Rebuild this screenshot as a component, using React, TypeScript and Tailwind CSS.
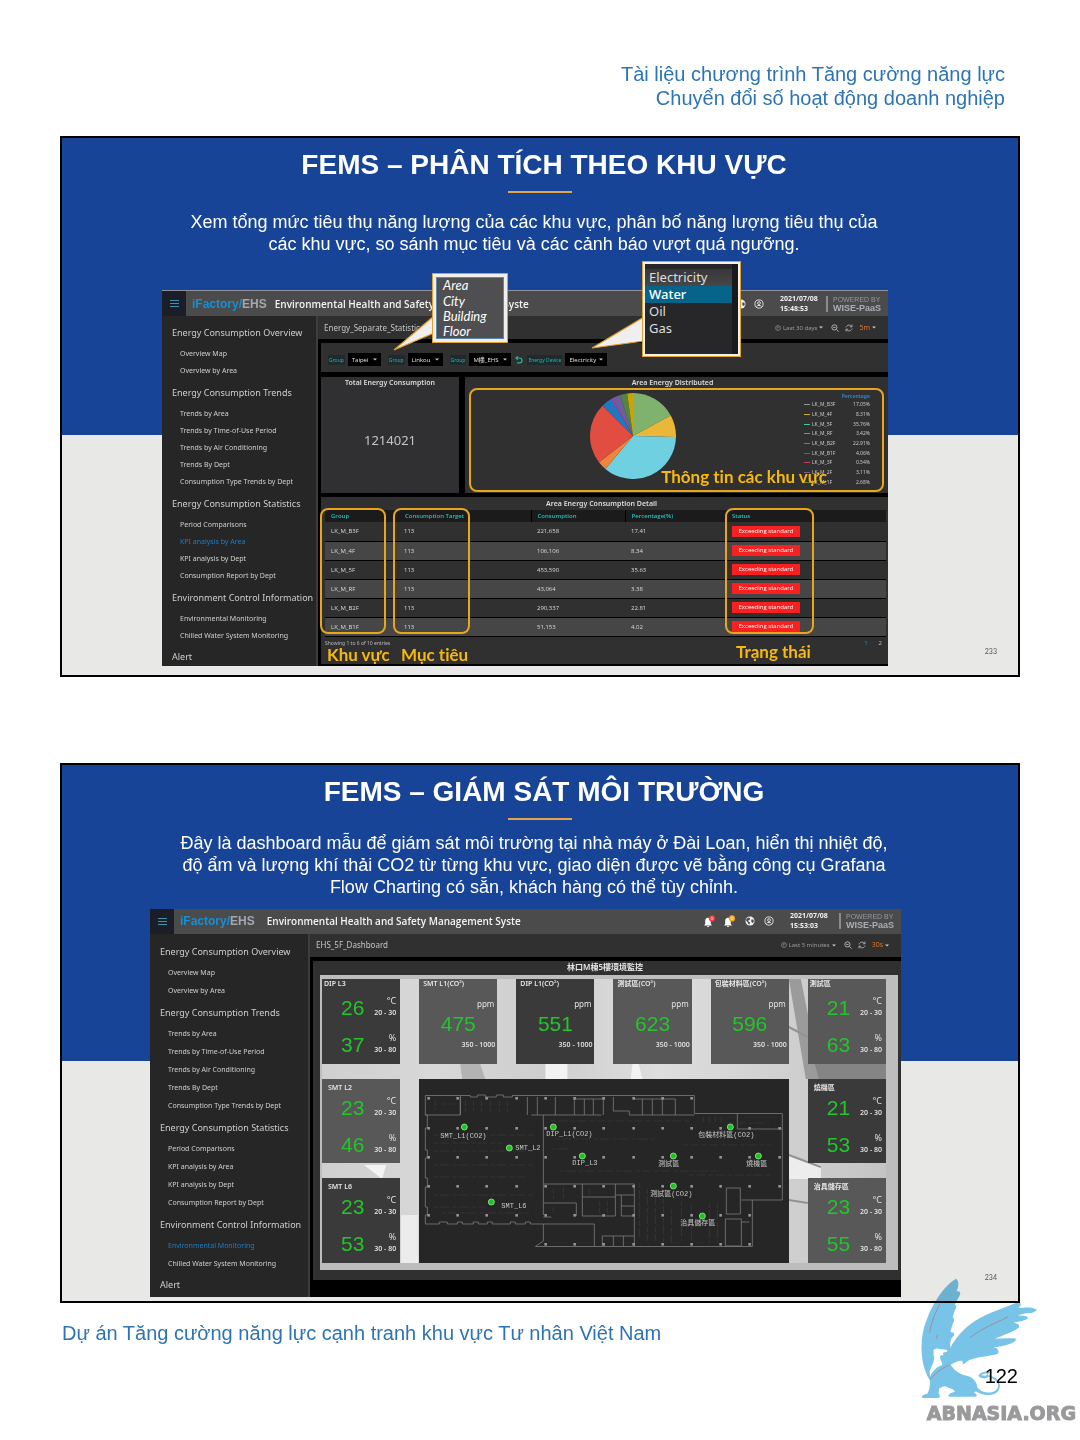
import React from 'react';

type NavGroup = { title: string; items: string[] };

const NAV: NavGroup[] = [
  { title: 'Energy Consumption Overview', items: ['Overview Map', 'Overview by Area'] },
  {
    title: 'Energy Consumption Trends',
    items: ['Trends by Area', 'Trends by Time-of-Use Period', 'Trends by Air Conditioning', 'Trends By Dept', 'Consumption Type Trends by Dept'],
  },
  {
    title: 'Energy Consumption Statistics',
    items: ['Period Comparisons', 'KPI analysis by Area', 'KPI analysis by Dept', 'Consumption Report by Dept'],
  },
  { title: 'Environment Control Information', items: ['Environmental Monitoring', 'Chilled Water System Monitoring'] },
];

function Sidebar({ active, roomy }: { active: string; roomy?: boolean }) {
  return (
    <nav className={`shrink-0 bg-[#262626] pl-[10px] whitespace-nowrap text-[#cfcfcf] ${roomy ? 'w-[158px] pt-[5px]' : 'w-[154px] pt-[3px]'}`}>
      {NAV.map((g) => (
        <section key={g.title}>
          <h3 className={`flex items-center pt-0.5 text-[9px] leading-3 ${roomy ? 'h-[25px]' : 'h-[26px]'}`}>{g.title}</h3>
          <ul>
            {g.items.map((i) => (
              <li key={i} className={`flex items-center pl-2 text-[7px] leading-3 ${roomy ? 'h-[18px]' : 'h-[17px]'}`}>
                <a href="#" className={i === active ? 'text-[#1b7fc4]' : ''}>{i}</a>
              </li>
            ))}
          </ul>
        </section>
      ))}
      <h3 className="flex h-[21px] items-center pt-1 text-[9px] leading-3">Alert</h3>
    </nav>
  );
}

function Globe() {
  return (
    <svg viewBox="0 0 10 10" className="size-[10px]">
      <circle cx="5" cy="5" r="4.5" fill="#f2f2f2" />
      <path d="M2 2.4L4 1.4L5.2 2.6L4.6 4L3.2 4.4L3.4 5.6L5 6.2L4.6 8.6L3.4 8L2.8 6.4L1.4 5L1 3.8ZM6.4 3.6L8.4 3.4L8.8 5.4L8 7L6.8 6.6L6.2 5.2Z" fill="#4a4a4a" />
    </svg>
  );
}

function UserIcon() {
  return (
    <svg viewBox="0 0 10 10" className="size-[10px]" fill="none" stroke="#e8e8e8">
      <circle cx="5" cy="5" r="4.1" strokeWidth="0.9" />
      <circle cx="5" cy="4.1" r="1.4" strokeWidth="0.9" />
      <path d="M2.6 7.4 C3.2 6 6.8 6 7.4 7.4" strokeWidth="1" />
    </svg>
  );
}

function Bell({ badge }: { badge: string }) {
  return (
    <svg viewBox="0 0 13 13" className="size-[13px]">
      <path d="M1 10.5 L2.2 9 V6 C2.2 3.8 3.4 2.8 5 2.8 C6.6 2.8 7.8 3.8 7.8 6 V9 L9 10.5 Z M3.8 11 H6.2 C6 12.2 4 12.2 3.8 11 Z" fill="#fff" />
      <circle cx="9" cy="3.4" r="3.1" fill={badge} />
      <ellipse cx="9" cy="3.4" rx="1" ry="1.6" fill="none" stroke="#fff" strokeWidth="0.6" />
    </svg>
  );
}

function TopBar({ time, bells }: { time: string; bells?: boolean }) {
  return (
    <header className="flex h-[25px] items-center bg-[#4b4b4b] pr-[7px] whitespace-nowrap">
      <button aria-label="Menu" className="flex h-full w-6 items-center justify-center bg-[#1c1e27]">
        <svg viewBox="0 0 9 7" className="h-[7px] w-[9px]" stroke="#3d93ae" strokeWidth="1"><path d="M0 .5H9M0 3.5H9M0 6.5H9" /></svg>
      </button>
      <span className="ml-1.5 font-['Liberation_Sans',sans-serif] text-[12px] leading-4 font-bold text-[#168fd6]">
        iFactory/<span className="text-[#a4a8ae]">EHS</span>
      </span>
      <h2 className={`font-['Open_Sans',sans-serif] text-[10px] leading-4 font-semibold text-[#f4f4f4] ${bells ? 'ml-3' : 'ml-2'}`}>Environmental Health and Safety Management Syste</h2>
      <div className={`ml-auto flex items-center ${bells ? 'gap-[9px]' : 'gap-2'}`}>
        {bells && <><Bell badge="#e5383b" /><span className="-ml-0.5"><Bell badge="#f0a020" /></span></>}
        <Globe />
        <UserIcon />
      </div>
      <p className={`text-[7px] leading-[10px] font-bold text-[#f0f0f0] ${bells ? 'ml-4 w-[43px]' : 'ml-4 w-10'}`}>2021/07/08<br />{time}</p>
      <div className="ml-[6px] h-4 border-l-2 border-[#8c8c8c] pl-[5px] font-['Liberation_Sans',sans-serif] text-[#9599a0]">
        <div className="text-[7px] leading-[7px]">POWERED BY</div>
        <div className="text-[9px] leading-[10px] font-bold text-[#a9adb5]">WISE-PaaS</div>
      </div>
    </header>
  );
}

function Crumbs({ name, range, every }: { name: string; range: string; every: string }) {
  return (
    <div className="flex h-[23px] items-center bg-[#303030] pr-3 pl-[6px] text-[8px] leading-3 text-[#c4c4c4]">
      <span>{name}</span>
      <button className="ml-auto flex items-center gap-0.5 text-[6px] text-[#9a9a9a]">
        <svg viewBox="0 0 6 6" className="size-[6px]" fill="none" stroke="#9a9a9a" strokeWidth=".7"><circle cx="3" cy="3" r="2.4" /><path d="M3 1.5V3H1.8" /></svg>
        {range} <Caret />
      </button>
      <svg viewBox="0 0 8 8" className="ml-2 size-2" fill="none" stroke="#b0b0b0" strokeWidth="1"><circle cx="3.4" cy="3.4" r="2.6" /><path d="M5.4 5.4L7.6 7.6M2.2 3.4H4.6" /></svg>
      <svg viewBox="0 0 8 8" className="ml-[6px] size-2" fill="none" stroke="#b0b0b0" strokeWidth=".9"><path d="M1 3.4C1.6 .6 5.6 .4 6.8 2.6M7 .6V2.8H4.8M7 4.6C6.4 7.4 2.4 7.6 1.2 5.4M1 7.4V5.2H3.2" /></svg>
      <button className="ml-[6px] flex items-center gap-0.5 text-[7px] text-[#e0742c]">{every} <Caret /></button>
    </div>
  );
}

function Caret() {
  return <svg viewBox="0 0 4 3" className="h-[3px] w-1 shrink-0"><path d="M0 .4H4L2 2.6Z" fill="#c8c8c8" /></svg>;
}

function Filter({ id, label, value, width }: { id: string; label: string; value: string; width: string }) {
  return (
    <div className="flex items-center text-[6px] leading-[10px]">
      <label htmlFor={id} className="bg-[#1f2a2d] px-px text-[5px] text-[#22b5af]">{label}</label>
      <div className="relative ml-[3px]">
        <select id={id} className={`h-[13px] appearance-none bg-black pl-1 font-['Open_Sans','Noto_Sans_CJK_TC',sans-serif] text-[#e2e2e2] ${width}`}><option>{value}</option></select>
        <span className="absolute top-[5px] right-1 flex"><Caret /></span>
      </div>
    </div>
  );
}

const SHARES = [
  { name: 'LK_M_B3F', pct: 17.05, slice: '#7eb26d', key: '#8f9c8c' },
  { name: 'LK_M_4F', pct: 8.31, slice: '#eab839', key: '#c7b021' },
  { name: 'LK_M_5F', pct: 35.76, slice: '#6ed0e0', key: '#3fc9a8' },
  { name: 'LK_M_RF', pct: 3.42, slice: '#ef843c', key: '#e8673a' },
  { name: 'LK_M_B2F', pct: 22.91, slice: '#e24d42', key: '#e2425c' },
  { name: 'LK_M_B1F', pct: 4.06, slice: '#1f78c1', key: '#1f78c1' },
  { name: 'LK_M_3F', pct: 0.54, slice: '#ba43a9', key: '#c0405e' },
  { name: 'LK_M_2F', pct: 3.11, slice: '#705da0', key: '#705da0' },
  { name: 'LK_M_1F', pct: 2.68, slice: '#508642', key: '#508642' },
];

function Pie() {
  const slices = [...SHARES.map((s) => ({ pct: s.pct, color: s.slice })), { pct: 2.16, color: '#cca300' }];
  let at = 0;
  const point = (p: number) => {
    const a = (p / 100) * Math.PI * 2;
    return `${43 + 43 * Math.sin(a)} ${43 - 43 * Math.cos(a)}`;
  };
  return (
    <svg viewBox="0 0 86 86" className="size-[86px]">
      {slices.map((s) => {
        const from = at;
        at += s.pct;
        return <path key={s.color} fill={s.color} d={`M43 43 L${point(from)} A43 43 0 0 1 ${point(at)} Z`} />;
      })}
    </svg>
  );
}

const ROWS = [
  ['LK_M_B3F', '113', '221,658', '17.41'],
  ['LK_M_4F', '113', '106,106', '8.34'],
  ['LK_M_5F', '113', '453,590', '35.63'],
  ['LK_M_RF', '113', '43,064', '3.38'],
  ['LK_M_B2F', '113', '290,337', '22.81'],
  ['LK_M_B1F', '113', '51,153', '4.02'],
];

function EnergyDashboard() {
  const label = "absolute font-['Lato',sans-serif] text-[17px] leading-5 font-bold whitespace-nowrap text-[#f8b90d] [font-variant-ligatures:none]";
  const frame = 'absolute rounded-lg border-2 border-[#e9a51c]';
  return (
    <div className="relative mr-[130px] ml-[100px] border-t border-[#8d9099] bg-black font-['Noto_Sans','Noto_Sans_CJK_TC',sans-serif]">
      <TopBar time="15:48:53" />
      <div className="flex">
        <Sidebar active="KPI analysis by Area" />
        <main className="min-w-0 flex-1 border-l-2 border-[#3d3d3d] bg-black pb-0.5">
          <Crumbs name="Energy_Separate_Statistic" range="Last 30 days" every="5m" />
          <div className="mt-1 ml-[3px] flex h-[29px] items-center gap-[7px] bg-[#303030] pt-1 pl-[7px]">
            <Filter id="city" label="Group" value="Taipei" width="w-[33px]" />
            <Filter id="site" label="Group" value="Linkou" width="w-[35px]" />
            <Filter id="building" label="Group" value="M樓_EHS" width="w-[42px]" />
            <button aria-label="Reload" className="-mx-[3px] flex"><svg viewBox="0 0 8 8" className="size-2" fill="none" stroke="#1fb5a0" strokeWidth="1.2"><path d="M1 2H4.6A2.3 2.3 0 0 1 4.6 6.8H2M2.8 .4L1 2L2.8 3.8" /></svg></button>
            <Filter id="device" label="Energy Device" value="Electricity" width="w-[42px]" />
          </div>
          <div className="mt-[5px] ml-[3px] flex h-[116px] gap-[6px]">
            <section className="flex w-[138px] flex-col bg-[#303033] text-center">
              <h4 className="text-[7px] leading-3 font-semibold text-[#dcdcdc]">Total Energy Consumption</h4>
              <p className="flex flex-1 items-center justify-center text-[13px] text-[#c4c4c4]">1214021</p>
            </section>
            <section className="relative flex-1 bg-[#303030]">
              <h4 className="pr-2 text-center text-[7px] leading-3 font-semibold text-[#dcdcdc]">Area Energy Distributed</h4>
              <div className="flex items-start justify-between pt-1 pr-[14px]">
                <div className="pl-[125px]"><Pie /></div>
                <table className="h-[94px] w-[70px] text-[5px] leading-[7px] text-[#c8c8c8]">
                  <thead><tr><th colSpan={3} className="pr-1 text-right font-bold text-[#2b83c7]">Percentage</th></tr></thead>
                  <tbody>
                    {SHARES.map((s) => (
                      <tr key={s.name}>
                        <td className="w-2"><div className="h-px w-[6px]" style={{ background: s.key }} /></td>
                        <td>{s.name}</td>
                        <td className="pr-1 text-right">{s.pct.toFixed(2)}%</td>
                      </tr>
                    ))}
                  </tbody>
                </table>
              </div>
              <div className={`${frame} top-[11px] right-1 bottom-[1px] left-1`} />
              <div className={`${label} right-[61px] bottom-[6px]`}>Thông tin các khu vực</div>
            </section>
          </div>
          <section className="relative mt-1 ml-[3px] bg-[#303030] pr-[2px] pl-1">
            <h4 className="h-[13px] pr-2 text-center text-[7px] leading-[13px] font-semibold text-[#dcdcdc]">Area Energy Consumption Detail</h4>
            <table className="w-full table-fixed text-left font-['Open_Sans',sans-serif] text-[6px] leading-[10px] text-[#dadada]">
              <thead>
                <tr className="h-3 bg-[#1b1b1b] text-[#22c3c0]">
                  <th className="w-[73px] pl-[6px] font-semibold">Group</th>
                  <th className="w-[133px] pl-[7px] font-semibold">Consumption Target</th>
                  <th className="w-[94px] border-l border-black pl-[6px] font-semibold">Consumption</th>
                  <th className="w-[101px] border-l border-black pl-[6px] font-semibold">Percentage(%)</th>
                  <th className="pl-[6px] font-semibold">Status</th>
                </tr>
              </thead>
              <tbody>
                {ROWS.map((r) => (
                  <tr key={r[0]} className="h-[19px] border-b border-black even:bg-[#464646]">
                    {r.map((c, i) => <td key={i} className="pl-[6px]">{c}</td>)}
                    <td className="pl-[6px]"><span className="block h-[11px] w-[68px] bg-[#fb2020] text-center leading-[11px] text-white">Exceeding standard</span></td>
                  </tr>
                ))}
              </tbody>
            </table>
            <div className="flex h-[27px] justify-between pt-px pr-1 text-[5px] leading-[10px] text-[#b8b8b8]">
              <span>Showing 1 to 6 of 10 entries</span>
              <span className="flex gap-[11px] text-[6px]"><a href="#" className="text-[#2f86c8]">1</a><a href="#">2</a></span>
            </div>
            <div className={`${frame} top-[11px] bottom-[30px] -left-px w-[66px]`} />
            <div className={`${frame} top-[11px] bottom-[30px] left-[72px] w-[77px]`} />
            <div className={`${frame} top-[11px] bottom-[30px] left-[404px] w-[89px]`} />
            <div className={`${label} -bottom-px left-[6px]`}>Khu vực</div>
            <div className={`${label} -bottom-px left-[80px]`}>Mục tiêu</div>
            <div className={`${label} bottom-0.5 left-[415px]`}>Trạng thái</div>
          </section>
        </main>
      </div>

      {/* Callouts for the two drop-downs */}
      <svg viewBox="0 0 46 40" className="absolute top-[20px] left-[230px] z-10 h-10 w-[46px]"><path d="M42 5L2 39L42 22" fill="#f1efee" stroke="#e0a030" strokeWidth="1.2" /></svg>
      <div className="absolute -top-[18px] left-[270px] z-20 h-[70px] w-[76px] border border-[#e0a030] bg-[#f1efee] p-[3px]">
        <ul className="h-full border border-[#5b87ad] bg-[#4f4f51] pl-[6px] font-['Lato',sans-serif] text-[13px] leading-[16px] text-white italic">
          {['Area', 'City', 'Building', 'Floor'].map((t) => <li key={t} className="h-[15px] leading-[15px] first:h-4">{t}</li>)}
        </ul>
      </div>
      <svg viewBox="0 0 56 34" className="absolute top-[25px] left-[428px] z-10 h-[34px] w-[56px]"><path d="M54 1L2 32L54 25" fill="#f1efee" stroke="#e0a030" strokeWidth="1.2" /></svg>
      <div className="absolute -top-[30px] left-[480px] z-20 h-24 w-[99px] border border-[#e0a030] bg-[#f6f2ea] p-0.5">
        <ul className="h-full border-r-[6px] border-[#1a1a1d] bg-[#27272a] pt-[5px] text-[13px] leading-[17px] text-[#dedede]">
          <li className="bg-linear-to-b from-[#37373a] to-[#474747] pl-1">Electricity</li>
          <li className="bg-[#06638a] pl-1 font-medium text-white">Water</li>
          <li className="pl-1">Oil</li>
          <li className="pl-1">Gas</li>
        </ul>
      </div>
    </div>
  );
}

const GREEN = "font-['Liberation_Sans',sans-serif] text-[21px] text-[#22c52a]";

function ClimateCard({ title, temp, hum, dark, top }: { title: string; temp: number; hum: number; dark?: boolean; top?: boolean }) {
  return (
    <section className={`pr-1 pl-[2px] text-[#e6e6e6] ${dark ? 'bg-[#3a3a3a]' : 'bg-[#585858]'}`}>
      <h4 className={`h-[17px] text-[7px] font-semibold ${top ? 'leading-[9px]' : 'pl-1 leading-[17px]'}`}>{title}</h4>
      {[{ v: temp, u: '°C', r: '20 - 30' }, { v: hum, u: '%', r: '30 - 80' }].map((m) => (
        <div key={m.u} className="flex h-[37px] items-start justify-between pl-[17px] last:h-6">
          <span className={`${GREEN} leading-6`}>{m.v}</span>
          <span className="text-right font-['Open_Sans',sans-serif] text-[9px] leading-[9px] whitespace-nowrap">{m.u}<br /><span className="text-[7px] leading-[16px] font-semibold">{m.r}</span></span>
        </div>
      ))}
    </section>
  );
}

function Co2Card({ title, value, dark }: { title: string; value: number; dark?: boolean }) {
  return (
    <section className={`flex flex-col text-[#e6e6e6] ${dark ? 'bg-[#3a3a3a]' : 'bg-[#585858]'}`}>
      <h4 className="h-[19px] pl-1 text-[7px] leading-[9px] font-semibold whitespace-nowrap">{title}(CO²)</h4>
      <span className="pr-[3px] text-right text-[8px] leading-3">ppm</span>
      <span className={`text-center ${GREEN} leading-[28px]`}>{value}</span>
      <span className="pr-0.5 text-right font-['Open_Sans',sans-serif] text-[7px] leading-[14px] font-semibold">350 - 1000</span>
    </section>
  );
}

const SENSORS = [
  { x: 45, y: 48, label: 'SMT_L1(CO2)', lx: 21, ly: 59 },
  { x: 90, y: 69, label: 'SMT_L2', lx: 96, ly: 71 },
  { x: 72, y: 123, label: 'SMT_L6', lx: 82, ly: 129 },
  { x: 134, y: 48, label: 'DIP_L1(CO2)', lx: 127, ly: 57 },
  { x: 163, y: 77, label: 'DIP_L3', lx: 153, ly: 86 },
  { x: 311, y: 48, label: '包裝材料區(CO2)', lx: 279, ly: 58 },
  { x: 254, y: 77, label: '測試區', lx: 239, ly: 87 },
  { x: 339, y: 77, label: '燒機區', lx: 327, ly: 87 },
  { x: 254, y: 107, label: '測試區(CO2)', lx: 231, ly: 117 },
  { x: 283, y: 137, label: '治具儲存區', lx: 261, ly: 146 },
];

function FloorPlan() {
  const xs = [9, 38, 67, 97, 126, 155, 184, 214, 243, 272, 301, 330, 360];
  const ys = [19, 49, 78, 107, 136, 165];
  const inside = (x: number, y: number) => !(x < 120 && y > 150) && !(x > 280 && y < 30) && !(x > 340 && y > 120);
  return (
    <svg viewBox="0 0 369 184" className="col-span-4 row-span-2 h-full w-full bg-[#262626]">
      <g fill="none" stroke="#7c7c7c" strokeWidth=".8">
        <path d="M6 16.5H51V18H58V16H66V18H77V16H84V18H93V16.5H275V34.5H363V121H333V167.5H116L124 162V145H111V143H106V145H96V143H91V145H73V143H68V145H59V143H54V145H43V143H38V145H28V143H20V145H6V136H8V128H6V108H8V99H6V79H8V71H6V49H8V36H6Z" />
        <path d="M6 36H41V16.5M41 18V36M108 18V36M118 18V36M136 18V36M112 36H182M124 36V136M155 20V36M165 20V36M174 20V36M184 20V36M155 20H184M194 18V32H210V36H275M214 20H256V36M223 20V36M233 20V36M243 20V36M318 34V50H363M124 105H215V167M163 105V137H196V105M163 118H196M196 116H215M202 116V137H215M202 127H215M124 124H157V137M124 138H132M124 145H175V167M183 167V157H215M194 157V167M204 157V167M322 121H333M307 109H321V135H307ZM306 140H322V167H306ZM322 143H330" />
      </g>
      <g stroke="#3b3b3b" strokeWidth=".7" fill="none" strokeDasharray="5 2 9 3">
        <path d="M16 22V31M22 25H35M46 22V33M54 22V32M62 22V33M71 22V33M80 22V33M88 22V33M14 56H116M14 64H84M14 72H116M14 86H114M14 98H110M14 116H114M14 128H66M22 134H110M132 42H270M136 60H236M132 70H148M140 92H300M220 104V160M228 110V162M236 110V162M244 120V164M252 130V164M262 122V162M272 126V164M290 124V164M298 124V164M310 44H350M264 66H352M270 96H352M284 38V44M290 38V44M296 38V44M302 38V44M134 110V120M144 108V120M134 128V134M170 110V115M180 122V134M188 122V134" />
      </g>
      {ys.map((y) => xs.filter((x) => inside(x, y)).map((x) => <rect key={`${x}-${y}`} x={x - 1} y={y - 1} width="2.6" height="2.6" fill="#959595" />))}
      {SENSORS.map((s) => (
        <g key={s.label}>
          <circle cx={s.x} cy={s.y} r="3" fill="#18c71c" stroke="#a6e5a0" strokeWidth=".8" />
          <text x={s.lx} y={s.ly} fill="#c8c8c8" className="font-['Liberation_Mono','Noto_Sans_CJK_TC',monospace] text-[7px]">{s.label}</text>
        </g>
      ))}
    </svg>
  );
}

function ClimateDashboard() {
  return (
    <div className="mr-[117px] ml-[88px] bg-black font-['Noto_Sans','Noto_Sans_CJK_TC',sans-serif]">
      <TopBar time="15:53:03" bells />
      <div className="flex">
        <Sidebar active="Environmental Monitoring" roomy />
        <main className="min-w-0 flex-1 border-l-2 border-[#3d3d3d] bg-black pb-[17px]">
          <Crumbs name="EHS_5F_Dashboard" range="Last 5 minutes" every="30s" />
          <section className="mt-1 ml-[3px] bg-[#303030] pr-[3px] pb-[10px] pl-[7px]">
            <h4 className="h-[14px] pr-2 text-center text-[8px] leading-3 font-semibold text-[#e6e6e6]">林口M棟5樓環境監控</h4>
            <div className="relative bg-[#bdbdbd] pt-1 pr-3 pb-[7px] pl-0.5">
              <svg viewBox="0 0 577 295" preserveAspectRatio="none" className="absolute inset-0 h-full w-full">
                <defs><linearGradient id="haze" x1="0" y1="0" x2="1" y2="0"><stop offset="0" stopColor="#cfcfcf" /><stop offset=".2" stopColor="#d8d8d8" /><stop offset=".4" stopColor="#cecece" /><stop offset=".6" stopColor="#dedede" /><stop offset="1" stopColor="#c4c4c4" /></linearGradient></defs>
                <path d="M2 4H565V288H2Z" fill="url(#haze)" />
                <path d="M140 89H160L165 104H142Z" fill="#b3b3b3" />
                <path d="M225 89H247V104H225Z" fill="#f2f2f2" />
                <path d="M312 89H318L322 104H310Z" fill="#f2f2f2" />
                <path d="M468 4H480L500 104H485Z" fill="#9b9b9b" />
                <path d="M494 89H565V104H498Z" fill="#858585" />
                <path d="M468 180L500 190V204H468Z" fill="#ededed" />
                <path d="M44 190H66L62 204Z" fill="#f4f4f4" />
                <path d="M81 240H98V288H81Z" fill="#ececec" />
                <path d="M468 52L487 62M468 180L500 192M468 225L487 228" stroke="#929292" strokeWidth="2" />
              </svg>
              <div className="relative grid grid-cols-6 grid-rows-[85px_84px_85px] gap-x-[19px] gap-y-[15px]">
                <ClimateCard title="DIP L3" temp={26} hum={37} dark top />
                <Co2Card title="SMT L1" value={475} />
                <Co2Card title="DIP L1" value={551} dark />
                <Co2Card title="測試區" value={623} />
                <Co2Card title="包裝材料區" value={596} />
                <ClimateCard title="測試區" temp={21} hum={63} top />
                <ClimateCard title="SMT L2" temp={23} hum={46} />
                <FloorPlan />
                <ClimateCard title="燒機區" temp={21} hum={53} dark />
                <ClimateCard title="SMT L6" temp={23} hum={53} dark />
                <ClimateCard title="治具儲存區" temp={23} hum={55} />
              </div>
            </div>
          </section>
        </main>
      </div>
    </div>
  );
}

function Slide({ title, text, page, children, className }: { title: string; text: React.ReactNode; page: string; children: React.ReactNode; className: string }) {
  return (
    <section className={`relative mx-[60px] border-2 border-black bg-[linear-gradient(#184497_55.3%,#e8e8e6_55.3%)] pt-[9px] text-white ${className}`}>
      <h1 className="pl-2 text-center text-[28px] leading-9 font-bold">{title}</h1>
      <div className="mx-auto mt-2 h-0.5 w-16 bg-[#e3a548]" />
      {text}
      {children}
      <span className="absolute right-[21px] bottom-[19px] font-['Lato',sans-serif] text-[7px] leading-[10px] text-[#555]">{page}</span>
    </section>
  );
}

function Griffin() {
  return (
    <svg viewBox="0 0 540 420" className="pointer-events-none absolute -top-[43px] right-0 h-[140px] w-[180px] mix-blend-multiply" fill="#78c3e8">
      <path d="M89 360C58 310 58 230 80 180C96 135 130 78 168 56C178 64 176 78 170 94C180 92 184 98 178 108L164 134C170 134 171 142 164 152L158 172C164 176 163 184 158 192L151 216C162 216 166 222 160 228C148 240 152 254 150 264C172 226 200 196 240 174C284 150 328 140 352 126C366 126 364 136 356 144C380 142 396 140 411 149C404 158 390 160 376 160L354 166C368 168 386 168 383 174C376 184 354 184 340 188C352 190 362 194 355 204C342 214 310 226 284 236C310 236 330 234 349 236C346 250 314 258 282 262C294 266 300 274 292 282C262 290 234 290 208 300L188 314C190 300 186 304 178 302C166 306 158 310 152 314C164 334 184 344 204 348C222 354 232 370 232 382C246 402 286 404 294 382C298 366 282 356 266 350C252 358 240 354 235 347C242 336 258 332 270 336C264 342 262 344 264 346C290 350 304 368 298 386C288 412 246 408 228 394L221 399C228 400 232 404 229 410H147C142 404 152 398 164 396C162 386 150 386 143 382C132 374 124 382 117 386L116 400C120 406 120 410 117 414H67C64 408 70 402 82 402C88 390 92 374 89 360Z" />
      <path d="M89 334C92 322 104 308 102 290C98 284 104 276 99 270L111 265C122 270 134 266 143 272C140 278 134 274 128 280C134 288 128 284 120 288C120 302 130 310 126 316C112 318 94 338 90 350Z" fill="#fff" className="mix-blend-normal" />
      <path d="M119 132C102 168 94 188 89 218M109 236L113 224M210 233C244 206 286 190 325 170M90 358C104 342 126 322 148 316" fill="none" stroke="#a08e98" strokeWidth="3" />
      <path d="M244 346C250 342 256 340 262 341L258 347Z" fill="#fff" />
    </svg>
  );
}

export default function App() {
  return (
    <div className="relative min-h-screen overflow-hidden bg-white font-['Liberation_Sans',Arial,sans-serif]">
      <header className="pt-[62px] pr-[75px] text-right text-[20px] leading-6 text-[#2e74b5]">
        <p>Tài liệu chương trình Tăng cường năng lực</p>
        <p>Chuyển đổi số hoạt động doanh nghiệp</p>
      </header>

      <div className="mt-[26px]">
        <Slide
          title="FEMS – PHÂN TÍCH THEO KHU VỰC"
          page="233"
          className="pb-[9px]"
          text={
            <p className="mt-[18px] mb-[35px] pr-3 text-center text-[18px] leading-[22px]">
              Xem tổng mức tiêu thụ năng lượng của các khu vực, phân bố năng lượng tiêu thụ của<br />
              các khu vực, so sánh mục tiêu và các cảnh báo vượt quá ngưỡng.
            </p>
          }
        >
          <EnergyDashboard />
        </Slide>
      </div>

      <div className="mt-[86px]">
        <Slide
          title="FEMS – GIÁM SÁT MÔI TRƯỜNG"
          page="234"
          className="pb-1"
          text={
            <p className="mt-3 mb-[11px] pr-3 text-center text-[18px] leading-[22px]">
              Đây là dashboard mẫu để giám sát môi trường tại nhà máy ở Đài Loan, hiển thị nhiệt độ,<br />
              độ ẩm và lượng khí thải CO2 từ từng khu vực, giao diện được vẽ bằng công cụ Grafana<br />
              Flow Charting có sẵn, khách hàng có thể tùy chỉnh.
            </p>
          }
        >
          <ClimateDashboard />
        </Slide>
      </div>

      <footer className="relative pt-[18px]">
        <p className="pl-[62px] text-[20px] leading-6 text-[#2e74b5]">Dự án Tăng cường năng lực cạnh tranh khu vực Tư nhân Việt Nam</p>
        <p className="mt-[19px] pr-[62px] text-right text-[20px] leading-6 text-black">122</p>
        <p className="mt-[13px] pr-1 text-right font-['DejaVu_Sans',sans-serif] text-[19px] leading-6 font-bold text-[#9a9a9c] [-webkit-text-stroke:1px_#9a9a9c]">ABNASIA.ORG</p>
        <Griffin />
      </footer>
    </div>
  );
}
